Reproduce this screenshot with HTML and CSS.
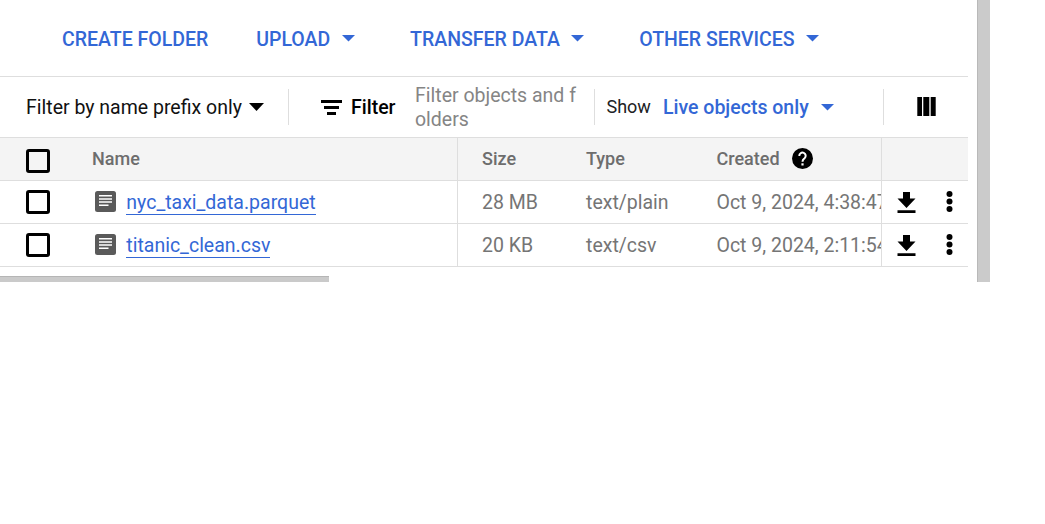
FILE: index.html
```html
<!DOCTYPE html>
<html lang="en">
<head>
<meta charset="utf-8">
<title>Bucket objects</title>
<link rel="stylesheet" href="styles.css">
</head>
<body>
<svg width="0" height="0" class="defs">
  <symbol id="caret" viewBox="0 0 13 7"><path d="M0 0h13L6.500 6.500z"/></symbol>
  <symbol id="caret-wide" viewBox="0 0 15 8"><path d="M0 0h15L7.500 8z"/></symbol>
  <symbol id="doc" viewBox="0 0 21 21"><rect width="21" height="21" rx="2.500" fill="#5a5a5a"/><path d="M4 4.700h13M4 7.900h13M4 11.100h13M4 14.300h9.500" stroke="#fff" stroke-width="1.500"/></symbol>
  <symbol id="download" viewBox="0 0 19 21"><path d="M6 0h7v6.500h5.500L9.500 16 .5 6.500H6zM.5 18.300h18V21H.5z"/></symbol>
  <symbol id="more" viewBox="0 0 7 21"><circle cx="3.500" cy="3" r="3"/><circle cx="3.500" cy="10.500" r="3"/><circle cx="3.500" cy="18" r="3"/></symbol>
</svg>
<div class="screen">
  <main class="panel">
    <nav class="actions">
      <a class="action create">CREATE FOLDER</a>
      <a class="action upload">UPLOAD<svg class="caret"><use href="#caret"/></svg></a>
      <a class="action transfer">TRANSFER DATA<svg class="caret"><use href="#caret"/></svg></a>
      <a class="action services">OTHER SERVICES<svg class="caret"><use href="#caret"/></svg></a>
    </nav>
    <div class="filters">
      <div class="prefix"><span class="prefix-text">Filter by name prefix only</span><svg class="caret-wide"><use href="#caret-wide"/></svg></div>
      <div class="filter">
        <svg class="filter-icon" viewBox="0 0 21 15"><path d="M0 0h21v3H0zM3 6h15v3H3zM6 12h9v3H6z"/></svg>
        <span class="filter-label">Filter</span>
        <span class="filter-input">Filter objects and f<br>olders</span>
      </div>
      <div class="show"><span class="show-label">Show</span><span class="show-value">Live objects only</span><svg class="caret"><use href="#caret"/></svg></div>
      <div class="columns"><svg class="columns-icon" viewBox="0 0 19 19"><path d="M.3 0H5v19H.3zM6.300 0h6v19h-6zM13.700 0h5v19h-5z"/></svg></div>
    </div>
    <div class="table">
      <div class="row head">
        <div class="name"><span class="check"></span><span class="name-title">Name</span></div>
        <div class="size">Size</div>
        <div class="type">Type</div>
        <div class="created"><span class="created-title">Created</span><svg class="help" viewBox="0 0 21 21"><circle cx="10.500" cy="10.500" r="10.500"/><path d="M7.300 8a3.200 3.200 0 1 1 5.300 2.200c-1.200 1-2.100 1.500-2.100 3.500" fill="none" stroke="#fff" stroke-width="2"/><path d="M9.400 15.300h2.200v2.200H9.400z" fill="#fff"/></svg></div>
        <div class="tools"></div>
      </div>
      <div class="row item">
        <div class="name"><span class="check"></span><svg class="doc"><use href="#doc"/></svg><a class="link">nyc_taxi_data.parquet</a></div>
        <div class="size">28 MB</div>
        <div class="type">text/plain</div>
        <div class="created">Oct 9, 2024, 4:38:47</div>
        <div class="tools"><svg class="download"><use href="#download"/></svg><svg class="more"><use href="#more"/></svg></div>
      </div>
      <div class="row item">
        <div class="name"><span class="check"></span><svg class="doc"><use href="#doc"/></svg><a class="link">titanic_clean.csv</a></div>
        <div class="size">20 KB</div>
        <div class="type">text/csv</div>
        <div class="created">Oct 9, 2024, 2:11:54</div>
        <div class="tools"><svg class="download"><use href="#download"/></svg><svg class="more"><use href="#more"/></svg></div>
      </div>
    </div>
    <div class="scroll-x"></div>
  </main>
  <div class="scroll-y"></div>
</div>
</body>
</html>
```

FILE: styles.css
```css
* { box-sizing: border-box; }
body { margin: 0; background: #fff; font-family: Roboto, "Liberation Sans", sans-serif; font-size: 19.5px; line-height: 24px; color: #202124; }
svg { display: block; flex: none; }
.defs { position: absolute; }
.screen { display: flex; gap: 9px; height: 282px; }
.panel { width: 968px; display: flex; flex-direction: column; }
.actions { display: flex; height: 77px; padding: 4px 0 0 62px; align-items: center; border-bottom: 1px solid #dedede; }
.action { display: flex; align-items: center; justify-content: space-between; color: #3367d6; font-weight: 500; white-space: nowrap; }
.create { width: 194.2px; }
.upload { width: 98.8px; margin-right: 55.1px; }
.transfer { width: 173.9px; margin-right: 55.2px; }
.services { width: 179.8px; }
.caret { width: 13px; height: 7px; fill: #3367d6; }
.action .caret { margin-bottom: 3px; }
.caret-wide { width: 15px; height: 8px; fill: #000; }
.filters { display: flex; height: 60px; align-items: center; white-space: nowrap; }
.prefix, .filter, .show { display: flex; align-items: center; height: 36px; border-right: 1px solid #dedede; }
.prefix { width: 289px; padding-left: 26px; }
.prefix-text { width: 223px; padding-top: 2px; color: #111; }
.filter { width: 306px; padding-left: 32px; }
.filter-icon { width: 21px; height: 15px; }
.filter-label { width: 64px; margin-left: 9px; padding-top: 2px; font-weight: 500; color: #000; }
.filter-input { padding-top: 2px; color: #858585; }
.show { width: 289px; padding-left: 11.5px; }
.show-label { width: 56.5px; font-size: 18px; }
.show-value { width: 158px; padding-top: 2px; color: #3367d6; font-weight: 500; }
.columns { padding-left: 33px; }
.columns-icon { width: 19px; height: 19px; margin-bottom: 1px; }
.table { border-top: 1px solid #dedede; color: #6d6d6d; white-space: nowrap; }
.row { display: grid; grid-template-columns: 458px 128px 130px 166px 86px; height: 43px; border-bottom: 1px solid #dedede; }
.row > div { display: flex; align-items: center; min-width: 0; }
.head { background: #f4f4f4; font-size: 18px; font-weight: 500; }
.head .check { margin-top: 4px; }
.item { color: #757575; }
.name { padding-left: 26px; border-right: 1px solid #dedede; }
.check { flex: none; width: 24px; height: 24px; border: 3px solid #000; border-radius: 3px; }
.name-title { margin-left: 42px; }
.doc { width: 21px; height: 21px; margin-left: 45px; margin-bottom: 1px; }
.link { height: 24px; margin: 1px 0 0 10.3px; color: #3367d6; border-bottom: 1px solid #3367d6; }
.size { padding-left: 24px; }
.item .size, .item .type, .item .created { padding-top: 2px; }
.created { padding-left: .5px; overflow: hidden; border-right: 1px solid #dedede; }
.created-title { width: 75.5px; }
.help { width: 21px; height: 21px; margin-bottom: 1px; }
.tools { padding-left: 15px; gap: 30px; }
.download { width: 19px; height: 21px; margin-top: 1px; }
.more { width: 7px; height: 21px; margin-bottom: 1px; }
.scroll-x { width: 329px; height: 6px; margin-top: 9px; background: #cacaca; border-top: 1px solid #b5b5b5; }
.scroll-y { width: 13px; background: #cbcbcb; border-left: 1px solid #b9b9b9; }
```
